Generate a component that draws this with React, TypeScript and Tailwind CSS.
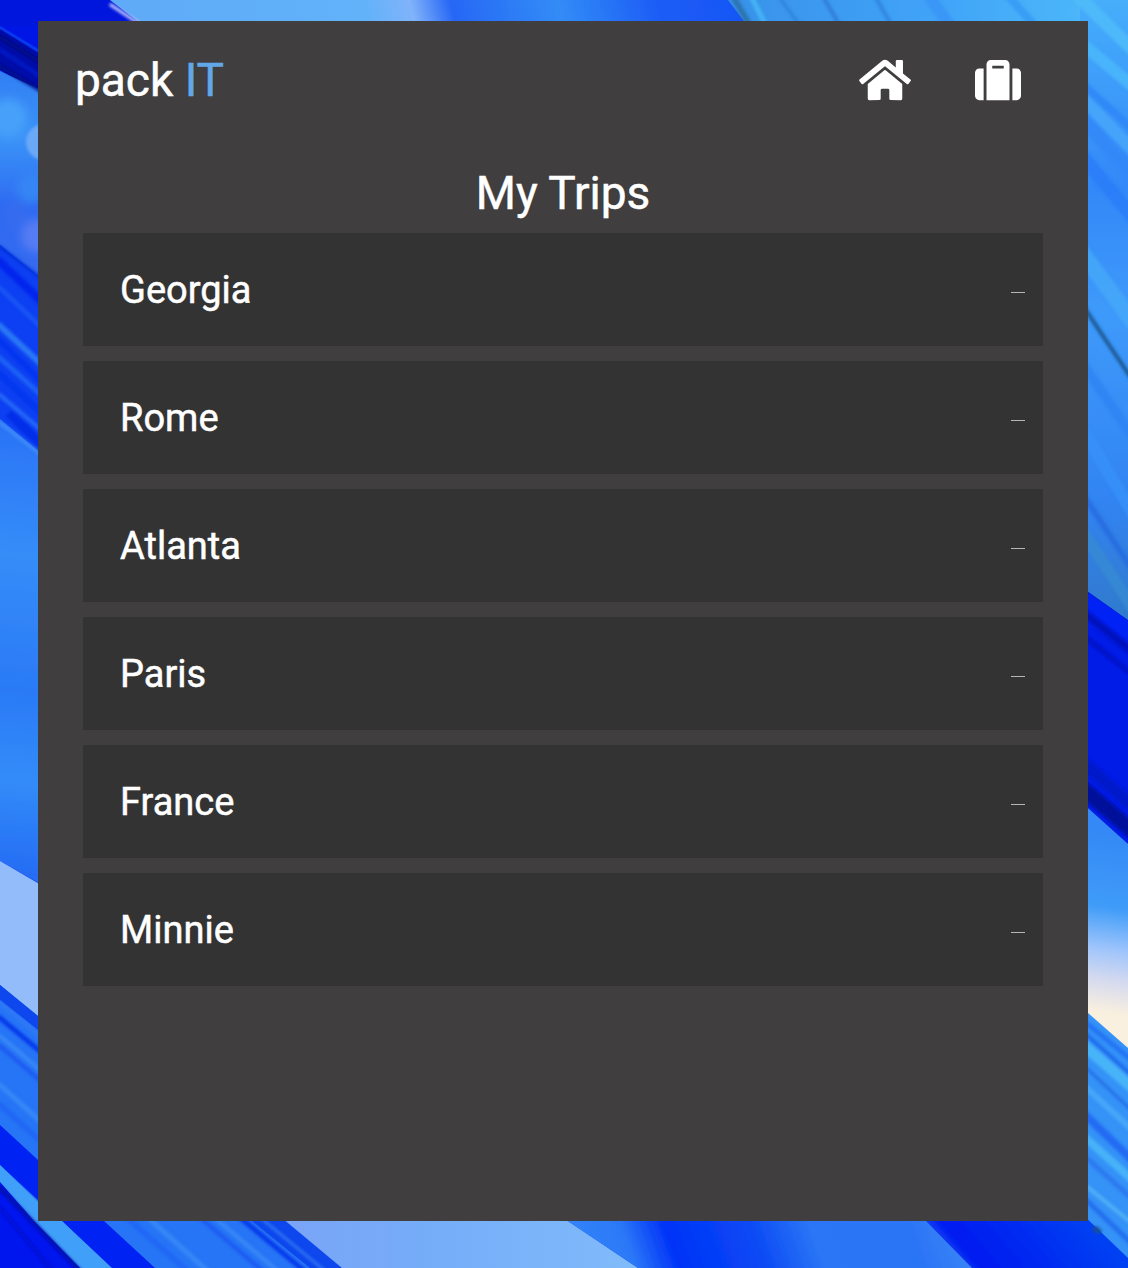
import { FaHome, FaSuitcase } from "react-icons/fa";

const trips = ["Georgia", "Rome", "Atlanta", "Paris", "France", "Minnie"];

type Band = [string, string];
type Streak = [number, number, number, number, number, string];

const leftBands: Band[] = [
  ["0,0 60,0 60,62 0,26", "#0019e6"],
  ["0,29 60,66 60,105 0,70", "#000ea8"],
  ["0,71 60,99 60,295 0,245", "url(#bokeh)"],
  ["0,245 60,293 60,480 0,420", "#0840f2"],
  ["0,419 60,469 60,895 0,861", "url(#azure)"],
  ["0,861 60,896 60,1036 0,985", "#92bcfa"],
];

const bottomBands: Band[] = [
  ["0,985 38,1016 285,1221 342,1268 0,1268", "#2874f6"],
  ["0,985 38,1016 285,1221 342,1268 310,1268 252,1221 38,1030 0,1000", "#0b46ed"],
  ["0,1125 38,1160 104,1221 155,1268 108,1268 62,1221 38,1200 0,1165", "#0020f2"],
  ["0,1165 38,1202 62,1221 112,1268 80,1268 34,1221 0,1182", "#41a0f9"],
  ["0,1182 34,1221 80,1268 0,1268", "#0018ee"],
  ["285,1221 568,1221 638,1268 342,1268 270,1208 548,1208", "url(#pale)"],
  ["548,1208 1100,1208 1100,1268 638,1268", "url(#floor)"],
  ["912,1208 1128,1208 1128,1268 972,1268 926,1221", "url(#floorDeep)"],
];

const topBands: Band[] = [
  ["0,0 112,0 146,26 0,26", "#0019dc"],
  ["110,0 760,0 760,26 144,26", "url(#sky)"],
  ["728,0 1128,0 1128,26 748,26", "url(#skyRight)"],
];

const rightBands: Band[] = [
  ["1080,0 1128,0 1128,625 1080,587", "url(#wall)"],
  ["1080,586 1128,620 1128,844 1080,801", "#001ee6"],
  ["1080,588 1128,621 1128,650 1080,620", "#0022f4"],
  ["1080,801 1128,844 1128,1055 1080,1010", "url(#glow)"],
  ["1080,1006 1128,1048 1128,1258 1080,1212", "#3592f7"],
];

const streaks: Streak[] = [
  [0, 37, 40, 62, 4, "#00097c"],
  [0, 50, 40, 76, 4, "#0618cf"],
  [0, 66, 40, 90, 4, "#000a86"],
  [0, 247, 40, 277, 3, "#0630d6"],
  [0, 262, 40, 300, 8, "#0322ec"],
  [0, 288, 40, 326, 5, "#1658f5"],
  [0, 326, 40, 363, 6, "#2e82f6"],
  [0, 341, 40, 380, 6, "#0634f0"],
  [0, 358, 40, 394, 5, "#1f68f7"],
  [0, 374, 40, 412, 7, "#0536ef"],
  [0, 395, 40, 429, 4, "#2a72f8"],
  [12, 416, 40, 443, 9, "#0228e8"],
  [0, 423, 40, 454, 3, "#4892f8"],
  [0, 1003, 285, 1238, 3, "#347bf5"],
  [0, 1018, 320, 1284, 5, "#052fea"],
  [0, 1036, 300, 1290, 4, "#3c8cf7"],
  [0, 1046, 280, 1286, 4, "#1554f2"],
  [0, 1085, 240, 1300, 5, "#3a8bf6"],
  [0, 1105, 220, 1300, 6, "#2066f6"],
  [0, 1188, 80, 1271, 4, "#000ea0"],
  [0, 1208, 50, 1268, 3, "#0012c8"],
  [1080, -2, 1128, 45, 13, "#50bcf9"],
  [1080, 42, 1128, 82, 12, "#4cb8fb"],
  [1080, 82, 1128, 125, 8, "#2f87f7"],
  [1080, 96, 1128, 145, 12, "#48a7fb"],
  [1080, 116, 1128, 169, 14, "#3388f8"],
  [1080, 154, 1128, 211, 14, "#2c7df8"],
  [1080, 250, 1128, 315, 16, "#45a9f8"],
  [1080, 360, 1128, 430, 10, "#2e84f4"],
  [1080, 425, 1128, 505, 12, "#3891f8"],
  [1080, 490, 1128, 563, 6, "#256be0"],
  [1080, 528, 1128, 600, 12, "#358ad4"],
  [1080, 610, 1128, 648, 8, "#0010b6"],
  [1080, 633, 1128, 671, 4, "#000fba"],
  [1080, 760, 1128, 802, 12, "#0014c5"],
  [1080, 786, 1128, 827, 15, "#000b8d"],
  [1080, 1018, 1128, 1057, 5, "#226ff4"],
  [1080, 1029, 1128, 1072, 4, "#1c66ec"],
  [1080, 1042, 1128, 1084, 11, "#4bbaf8"],
  [1080, 1062, 1128, 1107, 3, "#1f69e6"],
  [1080, 1082, 1128, 1126, 6, "#48abf8"],
  [1080, 1110, 1128, 1156, 8, "#2365f2"],
  [1080, 1133, 1128, 1176, 8, "#4bb8f8"],
  [1080, 1152, 1128, 1195, 5, "#2875ef"],
  [1080, 1181, 1128, 1220, 4, "#55b6f6"],
  [1080, 1194, 1128, 1240, 5, "#2368ee"],
  [734, -2, 750, 26, 6, "#286fa9"],
  [752, -2, 766, 26, 5, "#49b9f8"],
  [780, -2, 800, 26, 3, "#2d7fd7"],
  [824, -2, 840, 26, 4, "#2f78d6"],
  [876, -2, 892, 26, 4, "#3082df"],
  [930, -2, 950, 26, 12, "#3b94f7"],
  [1010, -2, 1035, 26, 8, "#369af5"],
];

function Paint() {
  return (
    <svg className="absolute inset-0 h-full w-full" viewBox="0 0 1128 1268" aria-hidden="true">
      <defs>
        <linearGradient id="bokeh" x1="0" y1="0" x2="0" y2="1">
          <stop offset="0" stopColor="#317ff4" />
          <stop offset=".3" stopColor="#3b93f7" />
          <stop offset=".6" stopColor="#2d6bf2" />
          <stop offset="1" stopColor="#3869f0" />
        </linearGradient>
        <linearGradient id="azure" gradientUnits="userSpaceOnUse" x1="40" y1="420" x2="0" y2="870">
          <stop offset="0" stopColor="#2a72f6" />
          <stop offset=".3" stopColor="#358df8" />
          <stop offset=".6" stopColor="#2b7af6" />
          <stop offset=".8" stopColor="#328cf8" />
          <stop offset="1" stopColor="#266df4" />
        </linearGradient>
        <linearGradient id="pale">
          <stop offset="0" stopColor="#7ba3f7" />
          <stop offset=".4" stopColor="#75acf9" />
          <stop offset="1" stopColor="#80bbfa" />
        </linearGradient>
        <linearGradient id="floor" gradientUnits="userSpaceOnUse" x1="570" y1="1268" x2="960" y2="1128">
          <stop offset="0" stopColor="#3287f8" />
          <stop offset=".15" stopColor="#2c78f7" />
          <stop offset=".25" stopColor="#0033f7" />
          <stop offset=".44" stopColor="#0b49f5" />
          <stop offset=".58" stopColor="#2a76f6" />
          <stop offset=".8" stopColor="#2b74f6" />
          <stop offset="1" stopColor="#4090f7" />
        </linearGradient>
        <linearGradient id="floorDeep" gradientUnits="userSpaceOnUse" x1="935" y1="1250" x2="1040" y2="1160">
          <stop offset="0" stopColor="#1c5df5" />
          <stop offset=".17" stopColor="#001bf0" />
          <stop offset=".5" stopColor="#0028f1" />
          <stop offset="1" stopColor="#0342f3" />
        </linearGradient>
        <linearGradient id="sky" gradientUnits="userSpaceOnUse" x1="110" y1="10" x2="740" y2="-150">
          <stop offset="0" stopColor="#5faaf8" />
          <stop offset=".38" stopColor="#62b2f9" />
          <stop offset=".45" stopColor="#80b3fa" />
          <stop offset=".51" stopColor="#2767f5" />
          <stop offset=".67" stopColor="#328cf6" />
          <stop offset=".82" stopColor="#1c5cf6" />
          <stop offset="1" stopColor="#1654f6" />
        </linearGradient>
        <linearGradient id="skyRight">
          <stop offset="0" stopColor="#3892e8" />
          <stop offset=".5" stopColor="#40a3f8" />
          <stop offset="1" stopColor="#4fbcf9" />
        </linearGradient>
        <linearGradient id="wall" x1="0" y1="0" x2="0" y2="1">
          <stop offset="0" stopColor="#46aefb" />
          <stop offset=".3" stopColor="#3388f8" />
          <stop offset=".5" stopColor="#3e9afa" />
          <stop offset=".8" stopColor="#3284f3" />
          <stop offset="1" stopColor="#2f79ca" />
        </linearGradient>
        <linearGradient id="glow" gradientUnits="userSpaceOnUse" x1="1118" y1="835" x2="1090" y2="1025">
          <stop offset="0" stopColor="#3489f6" />
          <stop offset=".38" stopColor="#3f9cf8" />
          <stop offset=".6" stopColor="#a0c5fb" />
          <stop offset=".75" stopColor="#d3d9ef" />
          <stop offset=".92" stopColor="#f8efdf" />
          <stop offset="1" stopColor="#f9f0df" />
        </linearGradient>
        <filter id="edge" filterUnits="userSpaceOnUse" x="-10" y="-10" width="1148" height="1288">
          <feGaussianBlur stdDeviation="0.7" />
        </filter>
        <filter id="soft" filterUnits="userSpaceOnUse" x="-20" y="-20" width="1168" height="1308">
          <feGaussianBlur stdDeviation="1.7" />
        </filter>
        <filter id="softer" filterUnits="userSpaceOnUse" x="-10" y="0" width="90" height="300">
          <feGaussianBlur stdDeviation="4" />
        </filter>
      </defs>
      <g filter="url(#edge)" strokeWidth="0">
        {[...leftBands, ...bottomBands, ...topBands, ...rightBands].map(([points, fill]) => (
          <polygon key={points} points={points} fill={fill} />
        ))}
      </g>
      <g filter="url(#softer)">
        <circle cx="8" cy="118" r="19" fill="#46a0f9" />
        <circle cx="32" cy="188" r="15" fill="#3585f4" />
        <circle cx="16" cy="214" r="13" fill="#366cef" />
        <circle cx="38" cy="236" r="17" fill="#557bf2" />
      </g>
      <g filter="url(#soft)" strokeLinecap="square">
        <circle cx="44" cy="142" r="18" fill="#6ba8f8" />
        {streaks.map(([x1, y1, x2, y2, width, color]) => (
          <line
            key={`${x1}-${y1}`}
            x1={x1}
            y1={y1}
            x2={x2 + (x2 - x1) / 4}
            y2={y2 + (y2 - y1) / 4}
            strokeWidth={width}
            stroke={color}
            opacity="0.85"
          />
        ))}
        <path d="M1082 304Q1100 332 1132 379" fill="none" stroke="#1c5994" strokeWidth="4" />
        <ellipse cx="1097" cy="1230" rx="5" ry="3" transform="rotate(35 1097 1230)" fill="#14509a" />
        <path d="M111 5l30 20" stroke="#cbd2ff" strokeWidth="3" />
      </g>
    </svg>
  );
}

export default function App() {
  return (
    <div className="relative h-[1268px] w-[1128px] overflow-hidden bg-[#0838f0] pt-[21px] pl-[38px] font-['Roboto',sans-serif] text-white">
      <Paint />
      <main className="relative h-[1200px] w-[1050px] bg-[#403e3f] [-webkit-text-stroke:0.5px_currentColor]">
        <header className="flex h-[118px] items-center justify-between pr-[67px] pl-[37px]">
          <h1 className="text-[46px] leading-[54px]">
            pack <span className="text-[#62a8e9]">IT</span>
          </h1>
          <nav className="flex items-center gap-16">
            <a href="#home" aria-label="Home">
              <FaHome className="h-[46px] w-[52px]" />
            </a>
            <a href="#trips" aria-label="Trips">
              <FaSuitcase className="size-[46px]" />
            </a>
          </nav>
        </header>
        <section className="px-[45px] pt-[27px]">
          <h2 className="mb-3 text-center text-[46px] leading-[55px]">My Trips</h2>
          <ul className="flex flex-col gap-[15px]">
            {trips.map((trip) => (
              <li key={trip} className="flex h-[113px] items-center justify-between bg-[#333] pr-[18px] pl-[37px]">
                <span className="text-[38px] leading-[44px]">{trip}</span>
                <button aria-label={`Remove ${trip}`} className="mt-[6px] h-px w-[14px] bg-[#b5b5b5]" />
              </li>
            ))}
          </ul>
        </section>
      </main>
    </div>
  );
}
